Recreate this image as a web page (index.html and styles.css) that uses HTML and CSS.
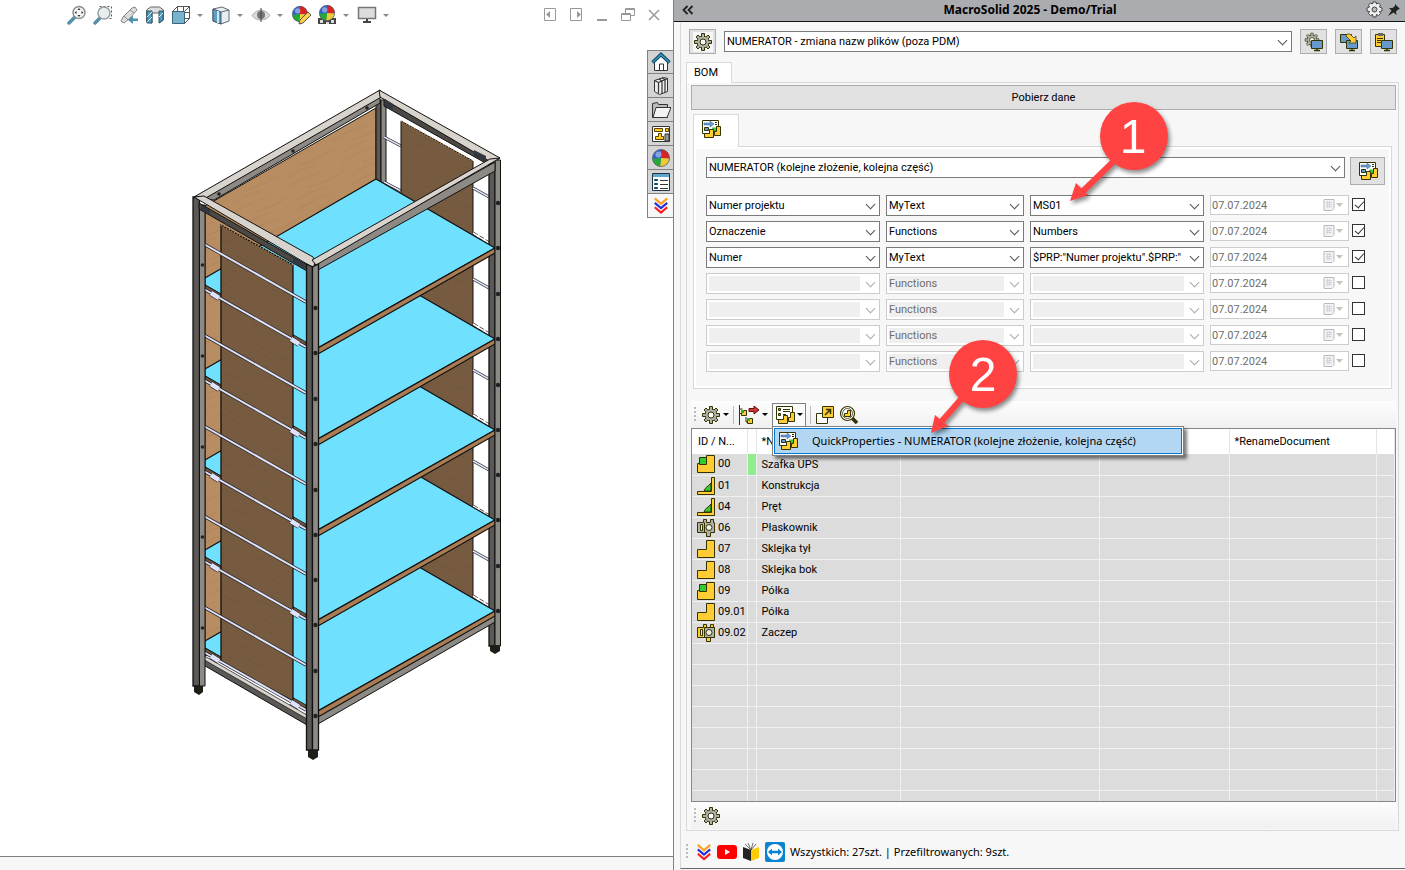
FILE: index.html
```
<!DOCTYPE html>
<html lang="pl">
<head>
  <meta charset="UTF-8">
  <title>MacroSolid 2025 - Demo/Trial</title>
  <link rel="stylesheet" href="styles.css">
</head>
<body>

  <!-- Shared icons -->
  <svg class="sprite" width="0" height="0" aria-hidden="true">
    <defs>
      <symbol id="gear" viewBox="0 0 20 20">
        <g fill="#b0b0a8" stroke="#333300" stroke-width="1">
          <path d="M8.5 1.5h3v17h-3zM1.5 8.5h17v3h-17z"/>
          <path d="M3 5l2-2 12 12-2 2zM15 3l2 2L5 17l-2-2z"/>
          <circle cx="10" cy="10" r="6"/>
        </g>
        <path d="M9 2h2v16H9zM2 9h16v2H2zM3.7 5L5 3.7 16.3 15 15 16.3zM15 3.7L16.3 5 5 16.3 3.7 15z" fill="#b0b0a8"/>
        <circle cx="10" cy="10" r="3" fill="#fff" stroke="#333300"/>
      </symbol>
      <symbol id="props" viewBox="0 0 20 20">
        <path d="M1.5 1.5h16v13h-16z" fill="#fff" stroke="#333300"/>
        <path d="M3 4h6V2l4 3-4 3V6H3z" fill="#6699cc" stroke="#336699" stroke-width=".5"/>
        <path d="M14 3.5h2M14 5.500h2" stroke="#333300"/>
        <path d="M3.5 8.5h4v3h-4z" fill="#6699cc" stroke="#333300"/>
        <path d="M11 8.5h4v5h-4z" fill="#33cc33"/>
        <path d="M15.5 7.5h4v9h-6v-4h2z" fill="#ffcc33" stroke="#333300"/>
        <path d="M8.5 10.5h4v8h-9v-4h5z" fill="#ffcc33" stroke="#333300"/>
      </symbol>
      <symbol id="list" viewBox="0 0 20 20">
        <path d="M1.5 1.5h16v13h-16z" fill="#fff" stroke="#333300"/>
        <path d="M3.5 3.5h2v2h-2zM3.5 8.5h2v2h-2z" fill="#6699cc" stroke="#333300"/>
        <path d="M8 4.5h7M8 6.5h7M8 9.5h3" stroke="#333300"/>
        <path d="M15.5 7.5h4v9h-6v-4h2z" fill="#ffcc33" stroke="#333300"/>
        <path d="M8.5 10.5h4v8h-9v-4h5z" fill="#ffcc33" stroke="#333300"/>
      </symbol>
      <symbol id="monitor" viewBox="0 0 20 20">
        <path d="M7.5 8.5h11v8h-11z" fill="#6699cc" stroke="#333300"/>
        <path d="M13 17v2M10 18.5h6" stroke="#333300" stroke-width="1.5"/>
      </symbol>
      <symbol id="assembly" viewBox="0 0 20 20">
        <path d="M1.5 9.5h9v-8h8v17h-17z" fill="#ffcc33" stroke="#333300"/>
        <path d="M3.5 3.5h7v7h-7z" fill="#33cc33" stroke="#333300"/>
      </symbol>
      <symbol id="part" viewBox="0 0 20 20">
        <path d="M1.5 10.5h9v-9h8v17h-17z" fill="#ffcc33" stroke="#333300"/>
      </symbol>
      <symbol id="weldment" viewBox="0 0 20 20">
        <path d="M8 15c1-4 4-4 7-8v8z" fill="#33cc33" stroke="#333300"/>
        <path d="M1.5 15.5h14v-14h3v17h-17z" fill="#ffcc33" stroke="#333300"/>
      </symbol>
      <symbol id="bolt" viewBox="0 0 20 20">
        <path d="M1.5 4.5h6v-3h3v3h4v-3h3v3h1v10h-4v4h-4v-4h-9z" fill="#b0b0a8" stroke="#333300"/>
        <path d="M4.5 6.5h2v6h-2zM8.5 4.5v10" fill="#eee" stroke="#333300"/>
        <circle cx="13" cy="9.5" r="3" fill="#eee" stroke="#333300"/>
      </symbol>
      <symbol id="bolt-yellow" viewBox="0 0 20 20">
        <path d="M1.5 4.5h6v-3h3v3h4v-3h3v3h1v10h-4v4h-4v-4h-9z" fill="#ffcc33" stroke="#333300"/>
        <path d="M8.5 4.5h10v10h-10z" fill="#b0b0a8" stroke="#333300"/>
        <path d="M4.5 6.5h2v6h-2z" fill="#eee" stroke="#333300"/>
        <circle cx="13" cy="9.5" r="3" fill="#eee" stroke="#333300"/>
      </symbol>
      <symbol id="calendar" viewBox="0 0 20 14">
        <path d="M1 1.5h10v9l-2 2H1z" fill="#f4f2f4" stroke="#bdb8bb"/>
        <path d="M3 4.5h6M3 6.5h6M3 8.5h6M4.5 3v7M6.5 3v7" stroke="#d3d6dc"/>
        <path d="M13 5h7l-3.500 4z" fill="#c4c4bc"/>
      </symbol>
      <symbol id="chevrons" viewBox="0 0 18 20">
        <path d="M2 2l7 6 7-6" fill="none" stroke="#ff9f1c" stroke-width="2.4"/>
        <path d="M2 7l7 6 7-6" fill="none" stroke="#2233dd" stroke-width="2.4"/>
        <path d="M2 12l7 6 7-6" fill="none" stroke="#ff1a1a" stroke-width="2.4"/>
      </symbol>
      <symbol id="ball" viewBox="0 0 20 20">
        <circle cx="10" cy="10" r="8.5" fill="#3366cc"/>
        <path d="M10 10V1.500a8.500 8.500 0 0 1 8.500 9z" fill="#dd2222"/>
        <path d="M10 10l8.500.5A8.500 8.500 0 0 1 9 18.400z" fill="#eecc33"/>
        <path d="M10 10l-1 8.400A8.500 8.500 0 0 1 1.500 11z" fill="#22aa33"/>
        <circle cx="7.5" cy="6.5" r="3" fill="#fff" opacity=".4"/>
        <circle cx="10" cy="10" r="8.5" fill="none" stroke="#555" stroke-width=".7"/>
      </symbol>
    </defs>
  </svg>

  <div class="workspace">
    <main class="viewport">
      <header class="view-bar">
        <div class="view-tools">
          <button class="tool" aria-label="Zoom to fit">
            <svg width="20" height="20"><path d="M2 18l6-6" stroke="#5590aa" stroke-width="3.5" stroke-linecap="round"/><circle cx="12" cy="7.5" r="6" fill="#f4f6f7" stroke="#8a8f92" stroke-width="1.5"/><path d="M12 3l1.500 2h-3zM12 12l1.500-2h-3zM7.500 7.500l2-1.500v3zM16.500 7.500l-2-1.500v3z" fill="#333"/></svg>
          </button>
          <button class="tool" aria-label="Zoom to area">
            <svg width="20" height="20"><path d="M6.5 1.5h12v12h-12z" fill="none" stroke="#555" stroke-dasharray="2 2"/><path d="M2 18l5-5" stroke="#5590aa" stroke-width="3.5" stroke-linecap="round"/><circle cx="11" cy="8" r="6" fill="#e8edf0" stroke="#9a9fa2" stroke-width="1.5"/></svg>
          </button>
          <button class="tool" aria-label="Previous view">
            <svg width="20" height="20"><path d="M2 16l2-4 9-9 3-1 2 3-8 9-5 4z" fill="#ddd" stroke="#888"/><path d="M5 11l4 4M11 5l4 3" stroke="#888"/><path d="M19 13.500h-5v-3l-5 4.500 5 4v-3h5z" fill="#4f91b0"/></svg>
          </button>
          <button class="tool" aria-label="Section view">
            <svg width="20" height="20"><path d="M1.500 5l4-3h9l4 3v10l-4 3V8H7v10l-5.500-1z" fill="#ddd" stroke="#666"/><path d="M2 6h5v12H2zM14 6h4v9l-4 3z" fill="#4f9ac0" stroke="#35596b"/><path d="M2 12l5-5M2 17l5-5M14 12l4-4" stroke="#d7ecf5"/></svg>
          </button>
          <button class="tool" aria-label="View orientation">
            <svg width="20" height="20"><path d="M6.500 1.500h12v12h-12zM12.500 1.500v12M6.500 7.500h12" fill="#fff" stroke="#555"/><path d="M1.500 6.500h12v12h-12z" fill="#79b4cf" stroke="#386577"/><path d="M1.500 6.500l5-5M13.500 6.500l5-5M13.500 18.500l5-5" stroke="#555"/></svg>
            <span class="caret"></span>
          </button>
          <button class="tool after-menu" aria-label="Display style">
            <svg width="20" height="20"><path d="M2 4l9-2 7 3v11l-8 3-8-3z" fill="#e7eef1" stroke="#667"/><path d="M2 4l8 3v12l-8-3z" fill="#5ca0c2" stroke="#456"/><path d="M7 6v12" stroke="#cde6f2" stroke-width="2"/><path d="M10 7l8-2" stroke="#667"/></svg>
            <span class="caret"></span>
          </button>
          <button class="tool after-menu" aria-label="Hide or show items">
            <svg width="20" height="20"><path d="M1 10.500c5-7 13-7 18 0-5 6-13 6-18 0z" fill="#ddd" stroke="#aaa"/><circle cx="10" cy="10" r="4" fill="#777"/><path d="M10 3v14" stroke="#444"/></svg>
            <span class="caret"></span>
          </button>
          <button class="tool after-menu" aria-label="Edit appearance">
            <svg width="20" height="20"><use href="#ball" width="18" height="18"/><path d="M8 19l1-4 8-8 3 3-8 8z" fill="#ffcf4a" stroke="#555"/></svg>
          </button>
          <button class="tool" aria-label="Apply scene">
            <svg width="20" height="20"><path d="M1 13h18v6H1z" fill="#444"/><path d="M3 15h3v3H3zM9 17h3v2H9zM14 15h3v3h-3z" fill="#ddd"/><use href="#ball" x="1" y="-1" width="18" height="18"/></svg>
            <span class="caret"></span>
          </button>
          <button class="tool after-menu" aria-label="View settings">
            <svg width="20" height="20"><path d="M1.500 2.500h17v11h-17z" fill="#dcdcdc" stroke="#777" stroke-width="1.5"/><path d="M10 14v3M6 17h8" stroke="#444" stroke-width="2"/></svg>
            <span class="caret"></span>
          </button>
        </div>
        <div class="window-tools">
          <button class="tool" aria-label="Previous pane"><svg width="14" height="14"><path d="M1.500.5h11v12h-11z" fill="none" stroke="#999"/><path d="M3 6.500L7 3v7z" fill="#999"/></svg></button>
          <button class="tool" aria-label="Next pane"><svg width="14" height="14"><path d="M1.500.5h11v12h-11z" fill="none" stroke="#999"/><path d="M12 6.500L8 3v7z" fill="#999"/></svg></button>
          <button class="tool" aria-label="Minimize"><svg width="14" height="14"><path d="M2 12h10" stroke="#999" stroke-width="2"/></svg></button>
          <button class="tool" aria-label="Restore"><svg width="14" height="14"><path d="M4.500 5V.5h9v7H10M.5 5.500h9v7h-9z" fill="none" stroke="#999"/><path d="M4 1.500h9M1 6.500h8" stroke="#999"/></svg></button>
          <button class="tool" aria-label="Close"><svg width="14" height="14"><path d="M2 2l10 10M12 2L2 12" stroke="#999" stroke-width="1.5"/></svg></button>
        </div>
      </header>

      <div class="scene">
        <svg class="rack" viewBox="180 80 330 690" role="img" aria-label="Szafka UPS">
          <defs>
            <pattern id="wood" width="60" height="24" patternUnits="userSpaceOnUse" patternTransform="rotate(-25)">
              <path d="M0 0h60v24H0z" fill="#b88d61"/>
              <path d="M0 4q20-3 40 0M20 12q20 3 40 0M5 19q16-3 30 0" fill="none" stroke="#ad8156" stroke-width="1.2" opacity=".6"/>
            </pattern>
            <pattern id="darkwood" width="60" height="24" patternUnits="userSpaceOnUse" patternTransform="rotate(25)">
              <path d="M0 0h60v24H0z" fill="#765b40"/>
              <path d="M0 4q20-3 40 0M20 12q20 3 40 0M5 19q16-3 30 0" fill="none" stroke="#6d533a" stroke-width="1.2" opacity=".6"/>
            </pattern>
            <g id="shelf">
              <path d="M205 278L376 179l119 69-181 102-8-6-101-59z" fill="#70e0ff" stroke="#111" stroke-width="1.2"/>
              <path d="M318 348l177-100v5L318 354z" fill="#a97c54" stroke="#111" stroke-width="1.2"/>
              <path d="M205 285l101 57v5l-101-57z" fill="#6f563c" stroke="#111" stroke-width=".8"/>
            </g>
            <g id="rod">
              <path d="M202 243l104 59" stroke="#222" stroke-width="3.2"/>
              <path d="M202 243l104 59" stroke="#dfe2fa" stroke-width="2"/>
            </g>
            <g id="cliprod">
              <use href="#rod" y="45"/>
              <path d="M211 293l8 5M291 339l8 5" stroke="#222" stroke-width="6"/>
              <path d="M211 293l8 5M291 339l8 5" stroke="#dfe2fa" stroke-width="4.5"/>
            </g>
            <g id="backrod">
              <path d="M473 188l16 9" stroke="#222" stroke-width="3"/>
              <path d="M473 188l16 9" stroke="#dfe2fa" stroke-width="1.5"/>
              <path d="M473 233l16 10" stroke="#222" stroke-width="3" stroke-dasharray="5 2"/>
              <path d="M473 233l16 10" stroke="#fff" stroke-width="1.5"/>
            </g>
            <g id="holes" fill="#222">
              <circle cx="315.5" cy="308" r="2.2"/><circle cx="315.5" cy="353" r="2.2"/>
              <circle cx="498" cy="203" r="2.2"/><circle cx="498" cy="248" r="2.2"/>
              <circle cx="202.5" cy="265" r="1.8"/>
            </g>
          </defs>

          <!-- back posts and plywood -->
          <path d="M205 206l171-98v452l-171 96z" fill="url(#wood)" stroke="#111"/>
          <path d="M376 100h5v90h-5z" fill="#5c5855" stroke="#111"/>
          <path d="M381 100h5v86h-5z" fill="#8d8984" stroke="#111"/>
          <path d="M384 137l17 9M384 182l17 9" stroke="#222" stroke-width="3"/>
          <path d="M384 137l17 9M384 182l17 9" stroke="#dfe2fa" stroke-width="1.5"/>
          <path d="M401 121l72 40v438l-72-40z" fill="url(#darkwood)" stroke="#111"/>
          <path d="M401 121l72 40" stroke="#c99a64" stroke-width="1.5" stroke-dasharray="1 2"/>
          <use href="#backrod"/><use href="#backrod" y="91"/><use href="#backrod" y="182"/><use href="#backrod" y="273"/><use href="#backrod" y="363"/>
          <path d="M489 163h6v483h-6z" fill="#5c5855" stroke="#111" stroke-width="1.3"/>

          <!-- bottom rails -->
          <path d="M318 714l177-100v8L318 724z" fill="#8d8984" stroke="#111"/>
          <path d="M200 655l107 61v9l-107-62z" fill="#5c5855" stroke="#111"/>
          <path d="M201 654l106 61v4l-106-61z" fill="#d8d3cc" stroke="#111" stroke-width=".7"/>

          <use href="#shelf" y="363"/><use href="#shelf" y="272"/><use href="#shelf" y="182"/><use href="#shelf" y="91"/><use href="#shelf"/>

          <!-- side panel and its rods -->
          <path d="M221 225l72 40v436l-72-39z" fill="url(#darkwood)" stroke="#111" stroke-width="1.3"/>
          <path d="M221 225l72 40" stroke="#c99a64" stroke-width="1.5" stroke-dasharray="1 2"/>
          <use href="#rod"/><use href="#rod" y="91"/><use href="#rod" y="182"/><use href="#rod" y="272"/><use href="#rod" y="363"/>
          <use href="#cliprod"/><use href="#cliprod" y="91"/><use href="#cliprod" y="182"/><use href="#cliprod" y="272"/><use href="#cliprod" y="363"/>

          <!-- top frame -->
          <path d="M203 199L380 97v6L214 200z" fill="#8d8984" stroke="#111"/>
          <path d="M194 197L380 90l3 6-179 103z" fill="#d8d3cc" stroke="#111"/>
          <path d="M384 99l105 60v6l-105-59z" fill="#4c4845" stroke="#111"/>
          <path d="M379 90l121 68-9 4-111-65z" fill="#d8d3cc" stroke="#111"/>
          <path d="M385 99l8 5v7l-8-5zM474 150l12 6v6l-12-6z" fill="#333740"/>
          <circle cx="293" cy="151" r="1.800" fill="#222"/>
          <circle cx="367" cy="108" r="1.800" fill="#222"/>
          <circle cx="219" cy="194" r="1.800" fill="#222"/>

          <!-- posts -->
          <path d="M193 197h6.500v489H193z" fill="#5c5855" stroke="#111" stroke-width="1.3"/>
          <path d="M199.500 205h5.500v481h-5.500z" fill="#8d8984" stroke="#111"/>
          <path d="M495 160h5.500v486H495z" fill="#8d8984" stroke="#111"/>
          <path d="M199 203l108 62v6l-108-62z" fill="#4c4845" stroke="#111"/>
          <path d="M194 197l10-1 109 61 4 7-5 3z" fill="#d8d3cc" stroke="#111"/>
          <path d="M201 205l9 5v5l-9-5zM293 258l12 7v4l-12-7z" fill="#333740"/>
          <path d="M314 264l181-102v9L318 270z" fill="#8d8984" stroke="#111"/>
          <path d="M312 260l178-101 10-1-184 107z" fill="#d8d3cc" stroke="#111"/>
          <path d="M306.500 264l6 3v483h-6z" fill="#5c5855" stroke="#111" stroke-width="1.3"/>
          <path d="M312.500 267l6-3v486h-6z" fill="#8d8984" stroke="#111" stroke-width="1.3"/>
          <path d="M194 686h9v6l-4 3-5-3zM308 750h10v7l-5 3-5-3zM490 645h10v6l-5 3-5-3z" fill="#1d1f17"/>
          <use href="#holes"/><use href="#holes" y="91"/><use href="#holes" y="182"/><use href="#holes" y="272"/><use href="#holes" y="363"/>
        </svg>
      </div>

      <nav class="side-tabs">
        <button aria-label="Home"><svg width="20" height="20"><path d="M3.500 10v8.500h13V10L10 4z" fill="#fff" stroke="#333"/><path d="M8.500 18v-6h4v6" fill="none" stroke="#333"/><path d="M1.500 10.500L10 2.500l8.500 8" fill="none" stroke="#0f4965" stroke-width="3.5"/><path d="M1.500 10.500L10 2.500l8.500 8" fill="none" stroke="#3b94b8" stroke-width="1.5"/></svg></button>
        <button aria-label="Design library"><svg width="20" height="20"><path d="M3.500 4.500l9-3 4 1v13l-8 3-5-3z" fill="#eee" stroke="#333"/><path d="M3.500 4.500l4 2v11M7.500 6.500l9-4M8 3l3 2v13M11 2l3 1.500v13" fill="none" stroke="#333" stroke-width="1.2"/></svg></button>
        <button aria-label="File explorer"><svg width="20" height="20"><path d="M1.500 17.500v-14l5-1 1 2h9v13z" fill="#bbb" stroke="#333"/><path d="M5 7.500h15l-4 10H2z" fill="#f4f4f4" stroke="#333"/></svg></button>
        <button aria-label="View palette"><svg width="20" height="20"><path d="M1.500 2.500h17v15h-17z" fill="#fff" stroke="#333"/><path d="M3.500 4.500h8v3h-8zM14.500 4.500h3v3h-3zM7.500 9.500h3v3h2v3h-8v-3h3z" fill="#ffcc22" stroke="#554400"/><path d="M14 10h4v7h-4z" fill="#999" stroke="#333"/></svg></button>
        <button aria-label="Appearances"><svg width="20" height="20"><use href="#ball"/></svg></button>
        <button aria-label="Custom properties"><svg width="20" height="20"><path d="M1.500 1.500h17v17h-17z" fill="#fff" stroke="#234"/><path d="M2 2h16v3H2z" fill="#5aa8cc"/><path d="M3.500 7.500h3v1h-3zM3.500 11.500h3v1h-3zM3.500 15.500h3v1h-3z" fill="#3b94b8" stroke="#0f4965"/><path d="M9 8.500h8M9 12.500h8M9 16.500h8" stroke="#333"/></svg></button>
        <button class="active" aria-label="MacroSolid"><svg width="16" height="19"><use href="#chevrons"/></svg></button>
      </nav>

      <footer class="view-footer"></footer>
    </main>

    <aside class="pane">
      <header class="pane-title">
        <button class="tool" aria-label="Collapse"><svg width="12" height="10"><path d="M5.500 1l-4 4 4 4M10.500 1l-4 4 4 4" fill="none" stroke="#222" stroke-width="1.8"/></svg></button>
        <h1>MacroSolid 2025 - Demo/Trial</h1>
        <button class="tool" aria-label="Settings"><svg width="17" height="17" viewBox="0 0 17 17"><path d="M7 1h3l.5 2 2-1 2 2-1 2 2.500 1v3l-2.500.5 1 2-2 2-2-1-.5 2.500H7l-.5-2.500-2 1-2-2 1-2L1 10V7l2.500-1-1-2 2-2 2 1z" fill="#eee" stroke="#444"/><circle cx="8.5" cy="8.5" r="2.5" fill="#bbb" stroke="#444"/></svg></button>
        <button class="tool" aria-label="Pin"><svg width="14" height="14"><path d="M8 1l5 5-2 .5-2 2 .5 3.500-3-2.500L1 13l3.500-5.500L2 5h3.500L8 3z" fill="#222"/></svg></button>
      </header>

      <div class="pane-body">
        <div class="macro-row">
          <button class="icon-btn" aria-label="Ustawienia"><svg class="white" width="20" height="20"><use href="#gear"/></svg></button>
          <span class="combo grow">
            <select aria-label="Makro"><option>NUMERATOR - zmiana nazw plików (poza PDM)</option></select>
          </span>
          <button class="icon-btn" aria-label="Konfiguracja"><svg width="20" height="20"><use href="#gear" width="16" height="16"/><use href="#monitor"/></svg></button>
          <button class="icon-btn" aria-label="Kopiuj"><svg width="20" height="20"><path d="M1.500 2.500h11v8h-11z" fill="#6699cc" stroke="#333300"/><use href="#monitor"/><path d="M8 2h3l4 4 2-2v7h-7l2-2-5-5z" fill="#ffcc33" stroke="#333300" stroke-width=".7"/></svg></button>
          <button class="icon-btn" aria-label="Wklej"><svg width="20" height="20"><path d="M1.500 2.500h9v12h-9z" fill="#ffcc33" stroke="#333300"/><path d="M4 1h5v3H4z" fill="#666"/><path d="M3 6.500h6M3 8.500h4M3 10.500h4" stroke="#333300"/><use href="#monitor"/></svg></button>
        </div>

        <div class="tabs"><button class="tab">BOM</button></div>
        <section class="page">
          <button class="load-btn">Pobierz dane</button>

          <div class="tabs inner"><button class="tab" aria-label="QuickProperties"><svg width="20" height="20"><use href="#props"/></svg></button></div>
          <div class="props">
            <div class="profile-row">
              <span class="combo grow">
                <select aria-label="Profil"><option>NUMERATOR (kolejne złożenie, kolejna część)</option></select>
              </span>
              <button class="icon-btn large" aria-label="Zastosuj"><svg width="20" height="20"><use href="#props"/></svg></button>
            </div>

            <div class="prop-grid">
              <span class="combo"><select aria-label="Właściwość 1"><option>Numer projektu</option></select></span>
              <span class="combo"><select aria-label="Typ 1"><option>MyText</option></select></span>
              <span class="combo"><select aria-label="Wartość 1"><option>MS01</option></select></span>
              <div class="date-cell"><span class="date"><input type="text" value="07.07.2024" aria-label="Data 1" disabled><svg width="20" height="14"><use href="#calendar"/></svg></span><input type="checkbox" aria-label="Wiersz 1" checked></div>

              <span class="combo"><select aria-label="Właściwość 2"><option>Oznaczenie</option></select></span>
              <span class="combo"><select aria-label="Typ 2"><option>Functions</option></select></span>
              <span class="combo"><select aria-label="Wartość 2"><option>Numbers</option></select></span>
              <div class="date-cell"><span class="date"><input type="text" value="07.07.2024" aria-label="Data 2" disabled><svg width="20" height="14"><use href="#calendar"/></svg></span><input type="checkbox" aria-label="Wiersz 2" checked></div>

              <span class="combo"><select aria-label="Właściwość 3"><option>Numer</option></select></span>
              <span class="combo"><select aria-label="Typ 3"><option>MyText</option></select></span>
              <span class="combo"><select aria-label="Wartość 3"><option>$PRP:"Numer projektu".$PRP:"</option></select></span>
              <div class="date-cell"><span class="date"><input type="text" value="07.07.2024" aria-label="Data 3" disabled><svg width="20" height="14"><use href="#calendar"/></svg></span><input type="checkbox" aria-label="Wiersz 3" checked></div>

              <span class="combo off"><select aria-label="Właściwość 4" disabled></select></span>
              <span class="combo off"><select aria-label="Typ 4" disabled><option>Functions</option></select></span>
              <span class="combo off"><select aria-label="Wartość 4" disabled></select></span>
              <div class="date-cell"><span class="date"><input type="text" value="07.07.2024" aria-label="Data 4" disabled><svg width="20" height="14"><use href="#calendar"/></svg></span><input type="checkbox" aria-label="Wiersz 4"></div>

              <span class="combo off"><select aria-label="Właściwość 5" disabled></select></span>
              <span class="combo off"><select aria-label="Typ 5" disabled><option>Functions</option></select></span>
              <span class="combo off"><select aria-label="Wartość 5" disabled></select></span>
              <div class="date-cell"><span class="date"><input type="text" value="07.07.2024" aria-label="Data 5" disabled><svg width="20" height="14"><use href="#calendar"/></svg></span><input type="checkbox" aria-label="Wiersz 5"></div>

              <span class="combo off"><select aria-label="Właściwość 6" disabled></select></span>
              <span class="combo off"><select aria-label="Typ 6" disabled><option>Functions</option></select></span>
              <span class="combo off"><select aria-label="Wartość 6" disabled></select></span>
              <div class="date-cell"><span class="date"><input type="text" value="07.07.2024" aria-label="Data 6" disabled><svg width="20" height="14"><use href="#calendar"/></svg></span><input type="checkbox" aria-label="Wiersz 6"></div>

              <span class="combo off"><select aria-label="Właściwość 7" disabled></select></span>
              <span class="combo off"><select aria-label="Typ 7" disabled><option>Functions</option></select></span>
              <span class="combo off"><select aria-label="Wartość 7" disabled></select></span>
              <div class="date-cell"><span class="date"><input type="text" value="07.07.2024" aria-label="Data 7" disabled><svg width="20" height="14"><use href="#calendar"/></svg></span><input type="checkbox" aria-label="Wiersz 7"></div>
            </div>
          </div>

          <div class="toolbar">
            <span class="grip"></span>
            <button class="tool" aria-label="Opcje"><svg width="20" height="20"><use href="#gear"/></svg><span class="caret dark"></span></button>
            <span class="divider"></span>
            <button class="tool" aria-label="Struktura"><svg width="22" height="20"><path d="M1.500 0v20M1.500 8.500h3M1.500 4h3M8 12v5h2" fill="none" stroke="#333300"/><path d="M3.500 5.500h5v5h-5zM9.500 13.500h5v5h-5z" fill="#ffcc33" stroke="#333300"/><path d="M3 5h3v3H3zM9 13h3v3H9z" fill="#33aa33"/><path d="M11 3.500h5V1l5 4-5 4V6.500h-5z" fill="#cc3333" stroke="#661111"/></svg><span class="caret dark"></span></button>
            <div class="dropdown">
              <button class="tool open" aria-label="QuickProperties"><svg width="20" height="20"><use href="#list"/></svg><span class="caret dark"></span></button>
              <div class="menu">
                <button class="menu-item"><svg width="20" height="20"><use href="#props"/></svg>QuickProperties - NUMERATOR (kolejne złożenie, kolejna część)</button>
              </div>
            </div>
            <span class="divider"></span>
            <button class="tool" aria-label="Otwórz"><svg width="20" height="20"><path d="M1.500 8.500h11v10h-11z" fill="#fff" stroke="#333300"/><path d="M7.500 1.500h11v11h-11z" fill="#ffcc33" stroke="#333300"/><path d="M10 10l5-5M11 4.500h4.500V9" fill="none" stroke="#333300" stroke-width="1.5"/></svg></button>
            <button class="tool" aria-label="Szukaj"><svg width="20" height="20"><path d="M13 13l5 5" stroke="#333300" stroke-width="3.5"/><circle cx="8.5" cy="8.5" r="7" fill="#fff" stroke="#333300" stroke-width="1.2"/><circle cx="8.5" cy="8.5" r="5" fill="none" stroke="#333300" stroke-width=".8"/><path d="M5.500 8.500h3v-3h3v6h-6z" fill="#ffcc33" stroke="#333300"/></svg></button>
          </div>

          <div class="grid-box">
            <table class="bom">
              <colgroup><col class="c-id"><col class="c-mark"><col class="c-name"><col class="c-a"><col class="c-b"><col class="c-doc"><col></colgroup>
              <thead>
                <tr><th>ID / N...</th><th></th><th>*Name</th><th></th><th></th><th>*RenameDocument</th><th></th></tr>
              </thead>
              <tbody>
                <tr><td><svg width="20" height="20"><use href="#assembly"/></svg>00</td><td class="mark"></td><td>Szafka UPS</td><td></td><td></td><td></td><td></td></tr>
                <tr><td><svg width="20" height="20"><use href="#weldment"/></svg>01</td><td></td><td>Konstrukcja</td><td></td><td></td><td></td><td></td></tr>
                <tr><td><svg width="20" height="20"><use href="#weldment"/></svg>04</td><td></td><td>Pręt</td><td></td><td></td><td></td><td></td></tr>
                <tr><td><svg width="20" height="20"><use href="#bolt"/></svg>06</td><td></td><td>Płaskownik</td><td></td><td></td><td></td><td></td></tr>
                <tr><td><svg width="20" height="20"><use href="#part"/></svg>07</td><td></td><td>Sklejka tył</td><td></td><td></td><td></td><td></td></tr>
                <tr><td><svg width="20" height="20"><use href="#part"/></svg>08</td><td></td><td>Sklejka bok</td><td></td><td></td><td></td><td></td></tr>
                <tr><td><svg width="20" height="20"><use href="#assembly"/></svg>09</td><td></td><td>Półka</td><td></td><td></td><td></td><td></td></tr>
                <tr><td><svg width="20" height="20"><use href="#part"/></svg>09.01</td><td></td><td>Półka</td><td></td><td></td><td></td><td></td></tr>
                <tr><td><svg width="20" height="20"><use href="#bolt-yellow"/></svg>09.02</td><td></td><td>Zaczep</td><td></td><td></td><td></td><td></td></tr>
                <tr><td></td><td></td><td></td><td></td><td></td><td></td><td></td></tr>
                <tr><td></td><td></td><td></td><td></td><td></td><td></td><td></td></tr>
                <tr><td></td><td></td><td></td><td></td><td></td><td></td><td></td></tr>
                <tr><td></td><td></td><td></td><td></td><td></td><td></td><td></td></tr>
                <tr><td></td><td></td><td></td><td></td><td></td><td></td><td></td></tr>
                <tr><td></td><td></td><td></td><td></td><td></td><td></td><td></td></tr>
                <tr><td></td><td></td><td></td><td></td><td></td><td></td><td></td></tr>
                <tr><td></td><td></td><td></td><td></td><td></td><td></td><td></td></tr>
              </tbody>
            </table>
          </div>

          <div class="toolbar">
            <span class="grip"></span>
            <button class="tool" aria-label="Opcje listy"><svg width="20" height="20"><use href="#gear"/></svg></button>
          </div>
        </section>

        <footer class="status">
          <span class="grip"></span>
          <button class="tool" aria-label="MacroSolid"><svg width="16" height="20"><use href="#chevrons"/></svg></button>
          <button class="tool" aria-label="YouTube"><svg width="20" height="14"><rect width="20" height="14" rx="3" fill="#ff0000"/><path d="M8 4l5 3-5 3z" fill="#fff"/></svg></button>
          <button class="tool" aria-label="Pomoc"><svg width="18" height="20"><path d="M1 5l8 3v11l-8-3z" fill="#222"/><path d="M17 5L9 8v11l8-3z" fill="#ffcc00"/><path d="M3 2l6 6 5-6M6 1l3 7 2-7" fill="none" stroke="#333" stroke-width=".7"/></svg></button>
          <button class="tool" aria-label="TeamViewer"><svg width="20" height="20"><rect width="20" height="20" rx="2" fill="#0b83cf"/><circle cx="10" cy="10" r="8" fill="#fff"/><path d="M3 10l4-3.500v2.300h6V6.500L17 10l-4 3.500v-2.300H7v2.300z" fill="#0b83cf"/></svg></button>
          <span>Wszystkich: 27szt. | Przefiltrowanych: 9szt.</span>
        </footer>
      </div>

      <!-- numbered callouts -->
      <svg class="callout first" width="120" height="120" viewBox="1060 95 120 120">
        <path d="M1113 162l-32 31" stroke="#ff4343" stroke-width="6"/>
        <path d="M1070 201l6-18 12 12z" fill="#ff4343"/>
        <circle cx="1134" cy="136" r="34" fill="#ff4343"/>
        <text x="1133" y="153">1</text>
      </svg>
      <svg class="callout second" width="110" height="110" viewBox="920 335 110 110">
        <path d="M963 397l-22 25" stroke="#ff4343" stroke-width="6"/>
        <path d="M931 433l4-18 13 11z" fill="#ff4343"/>
        <circle cx="983" cy="374" r="34" fill="#ff4343"/>
        <text x="983" y="391">2</text>
      </svg>
    </aside>
  </div>

</body>
</html>
```
FILE: styles.css
```
/* Base */
* {
  margin: 0;
  padding: 0;
  box-sizing: border-box;
}

body {
  font-family: Roboto, "Liberation Sans", sans-serif;
  font-size: 11px;
  color: #000;
  background-color: #fff;
}

button, select, input {
  font: inherit;
  color: inherit;
}

svg {
  display: block;
  flex: none;
}

.sprite {
  position: absolute;
}

.workspace {
  display: grid;
  grid-template-columns: 1fr 732px;
  height: 100vh;
  min-height: 700px;
}

.tool {
  display: flex;
  align-items: center;
  border: none;
  background: none;
}

.caret {
  margin-left: 6px;
  border: 3px solid transparent;
  border-top-color: #888;
  border-bottom: none;
}

.caret.dark {
  margin-left: 2px;
  border-top-color: #000;
}

/* 3D view */
.viewport {
  position: relative;
  display: flex;
  flex-direction: column;
  min-width: 0;
}

.view-bar {
  display: flex;
  justify-content: space-between;
  align-items: center;
  height: 30px;
  padding: 0 12px 0 67px;
}

.view-tools {
  display: flex;
  gap: 6px;
}

.view-tools .after-menu {
  margin-left: 2px;
}

.window-tools {
  display: flex;
  gap: 12px;
}

.scene {
  flex: 1;
  display: flex;
  justify-content: center;
  padding: 50px 0 0 17px;
  min-height: 0;
}

.rack {
  width: 330px;
  height: 690px;
}

.side-tabs {
  position: absolute;
  top: 50px;
  right: 0;
  width: 26px;
  border: 1px solid #808080;
  border-right: none;
}

.side-tabs button {
  display: flex;
  align-items: center;
  justify-content: center;
  width: 25px;
  height: 24px;
  border: none;
  border-bottom: 1px solid #808080;
  background-color: #d4d4d4;
}

.side-tabs button:first-child {
  height: 23px;
}

.side-tabs .active {
  height: 23px;
  border-bottom: none;
  background-color: #f7f7f7;
}

.view-footer {
  height: 14px;
  border-top: 1px solid #808080;
  background-color: #f7f7f7;
}

/* Task pane */
.pane {
  position: relative;
  display: flex;
  flex-direction: column;
  min-height: 0;
  border-left: 1px solid #808080;
  background-color: #f7f7f7;
}

.pane-title {
  display: flex;
  align-items: center;
  gap: 4px;
  height: 22px;
  padding: 0 4px 2px 8px;
  border-bottom: 1px solid #111;
  background-color: #abacb0;
}

.pane-title h1 {
  flex: 1;
  font-family: "Noto Sans", sans-serif;
  font-size: 12px;
  font-weight: bold;
  text-align: center;
}

.pane-body {
  flex: 1;
  display: flex;
  flex-direction: column;
  min-height: 0;
  margin: 1px 0 1px 6px;
  padding: 6px 6px 0 5px;
  border-left: 1px solid #d9d9d9;
  border-bottom: 1px solid #666;
}

.macro-row {
  display: flex;
  align-items: center;
  gap: 8px;
  padding: 0 2px 0 3px;
}

.icon-btn {
  display: flex;
  align-items: center;
  justify-content: center;
  width: 27px;
  height: 25px;
  border: 1px solid #adadad;
  background-color: #e1e1e1;
}

.icon-btn.large {
  width: 35px;
  height: 28px;
}

.white {
  background-color: #f7f7f7;
}

.grow {
  flex: 1;
}

/* Combo boxes */
.combo {
  position: relative;
  display: block;
  min-width: 0;
  color: #000;
}

.combo select {
  appearance: none;
  display: block;
  width: 100%;
  height: 21px;
  padding: 0 18px 1px 2px;
  border: 1px solid #7a7a7a;
  background-color: #fff;
  opacity: 1;
}

.combo::after {
  content: "";
  position: absolute;
  top: 6px;
  right: 6px;
  width: 6px;
  height: 6px;
  border: solid #555;
  border-width: 0 1px 1px 0;
  transform: rotate(45deg);
  pointer-events: none;
}

.combo.off select {
  color: #6d6d6d;
  border-color: #ccc;
  background: linear-gradient(#efefef, #efefef) 2px 2px / calc(100% - 21px) 15px no-repeat #fff;
}

.combo.off::after {
  border-color: #aaa;
}

/* Tabs */
.tabs {
  display: flex;
  margin-top: 8px;
}

.tab {
  position: relative;
  height: 21px;
  margin-bottom: -1px;
  padding: 0 13px 2px 7px;
  border: 1px solid #d9d9d9;
  border-bottom: none;
  background-color: #fff;
}

.tabs.inner {
  margin: 4px 0 0 2px;
}

.inner .tab {
  height: 33px;
  padding: 0 17px 4px 7px;
}

.page {
  flex: 1;
  display: flex;
  flex-direction: column;
  min-height: 0;
  padding: 2px 2px 1px 4px;
  border: 1px solid #d9d9d9;
  background-color: #f7f7f7;
}

.load-btn {
  height: 25px;
  border: 1px solid #adadad;
  background-color: #e1e1e1;
}

.props {
  margin: 0 4px 0 2px;
  padding: 10px 6px 16px 9px;
  border: 1px solid #d9d9d9;
  box-shadow: inset 0 0 0 2px #fff;
}

.profile-row {
  display: flex;
  gap: 5px;
  margin-bottom: 10px;
  padding-left: 3px;
}

.prop-grid {
  display: grid;
  grid-template-columns: minmax(0, 174fr) minmax(0, 138fr) minmax(0, 174fr) minmax(0, 155fr);
  gap: 5px 6px;
  margin-right: 20px;
  padding-left: 3px;
}

.date-cell {
  display: flex;
  align-items: flex-start;
  gap: 3px;
}

.date {
  flex: 1;
  display: flex;
  align-items: center;
  min-width: 0;
  height: 20px;
  padding-right: 5px;
  border: 1px solid #ccc;
  background-color: #fff;
}

.date input {
  flex: 1;
  min-width: 0;
  padding-left: 1px;
  border: none;
  background: none;
  color: #6d6d6d;
}

input[type="checkbox"] {
  appearance: none;
  position: relative;
  width: 13px;
  height: 13px;
  margin-top: 3px;
  border: 1px solid #333;
  background-color: #fff;
}

input[type="checkbox"]:checked::after {
  content: "";
  position: absolute;
  top: 0;
  left: 4px;
  width: 4px;
  height: 8px;
  border: solid #333;
  border-width: 0 1px 1px 0;
  transform: rotate(42deg);
}

/* Toolbars */
.toolbar {
  display: flex;
  align-items: center;
  gap: 4px;
  height: 27px;
  padding-left: 3px;
  background: linear-gradient(#fdfdfd, #f0f0f0);
}

.props + .toolbar {
  margin-top: 12px;
}

.grip {
  width: 2px;
  height: 15px;
  background: repeating-linear-gradient(#bbb 0 2px, transparent 2px 4px);
}

.toolbar .grip {
  margin-right: 1px;
}

.divider {
  width: 1px;
  height: 18px;
  background-color: #bbb;
}

.dropdown {
  position: relative;
}

.tool.open {
  height: 24px;
  padding: 0 2px;
  border: 1px solid #808080;
  background-color: #fafafa;
}

.menu {
  position: absolute;
  z-index: 2;
  top: 23px;
  left: 0;
  padding: 1px;
  border: 1px solid #808080;
  background-color: #fff;
  box-shadow: 3px 3px 3px rgba(0, 0, 0, 0.5);
}

.menu-item {
  display: flex;
  align-items: center;
  gap: 14px;
  width: 408px;
  height: 26px;
  padding-left: 3px;
  border: 1px solid #0078d7;
  background-color: #b3d7f3;
  font-family: "Noto Sans", sans-serif;
  white-space: nowrap;
}

/* BOM list */
.grid-box {
  flex: 1;
  min-height: 0;
  overflow: hidden;
  border: 1px solid #828790;
  background-color: #dcdcdc;
}

.bom {
  width: 100%;
  table-layout: fixed;
  border-collapse: collapse;
}

.c-id { width: 55px; }
.c-mark { width: 9px; }
.c-name { width: 144px; }
.c-a { width: 199px; }
.c-b { width: 130px; }
.c-doc { width: 147px; }

.bom th {
  height: 25px;
  padding-left: 5px;
  border-right: 1px solid #e5e5e5;
  background-color: #fff;
  font-weight: normal;
  text-align: left;
  white-space: nowrap;
}

.bom th:first-child {
  padding-left: 6px;
}

.bom td {
  height: 21px;
  padding-left: 5px;
  border-right: 1px solid #f0f0f0;
  border-bottom: 1px solid #f0f0f0;
  white-space: nowrap;
}

.bom td:first-child {
  padding-left: 4px;
}

.bom td svg {
  display: inline-block;
  margin-right: 2px;
  vertical-align: middle;
}

.bom .mark {
  background-color: #90ee90;
}

/* Status bar */
.status {
  display: flex;
  align-items: center;
  gap: 5px;
  height: 31px;
  margin: 5px 0 1px;
  font-family: "Noto Sans", sans-serif;
}

.status .grip {
  margin-right: 3px;
}

/* Callouts */
.callout {
  position: absolute;
  z-index: 3;
  filter: drop-shadow(2px 3px 2px rgba(0, 0, 0, 0.45));
}

.callout text {
  fill: #fff;
  font-family: "Liberation Sans", sans-serif;
  font-size: 48px;
  text-anchor: middle;
}

.first {
  top: 95px;
  left: 386px;
}

.second {
  top: 335px;
  left: 246px;
}
```
